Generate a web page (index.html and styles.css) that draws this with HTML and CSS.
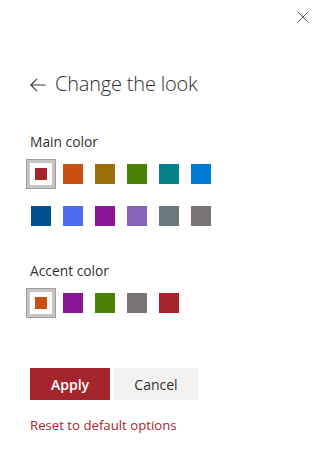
FILE: index.html
```html
<!DOCTYPE html>
<html lang="en">
<head>
	<meta charset="utf-8" />
	<title>Change the look</title>
	<link rel="stylesheet" href="styles.css">
</head>
<body>

<div class="panel">
	<div class="header">
		<button class="close" aria-label="Close">
			<svg width="12" height="12" viewBox="0 0 12 12"><path d="M0.5 0.5 L11.5 11.5 M11.5 0.5 L0.5 11.5" stroke="#605e5c" stroke-width="1" fill="none"/></svg>
		</button>
	</div>

	<div class="content">
		<h2 class="title">
			<svg class="back" width="16" height="14" viewBox="0 0 16 14"><path d="M7 0.8 L0.8 7 L7 13.2 M0.8 7 L15.5 7" stroke="#323130" stroke-width="1.1" fill="none"/></svg>
			<span>Change the look</span>
		</h2>

		<p class="label">Main color</p>
		<div class="swatches">
			<div class="cell selected"><span style="background:#a4262c"></span></div>
			<div class="cell"><span style="background:#ca5010"></span></div>
			<div class="cell"><span style="background:#986f0b"></span></div>
			<div class="cell"><span style="background:#498205"></span></div>
			<div class="cell"><span style="background:#038387"></span></div>
			<div class="cell"><span style="background:#0078d4"></span></div>
			<div class="cell"><span style="background:#004e8c"></span></div>
			<div class="cell"><span style="background:#4f6bed"></span></div>
			<div class="cell"><span style="background:#881798"></span></div>
			<div class="cell"><span style="background:#8764b8"></span></div>
			<div class="cell"><span style="background:#69797e"></span></div>
			<div class="cell"><span style="background:#7a7574"></span></div>
		</div>

		<p class="label accent-label">Accent color</p>
		<div class="swatches">
			<div class="cell selected"><span style="background:#ca5010"></span></div>
			<div class="cell"><span style="background:#881798"></span></div>
			<div class="cell"><span style="background:#498205"></span></div>
			<div class="cell"><span style="background:#7a7574"></span></div>
			<div class="cell"><span style="background:#a4262c"></span></div>
		</div>

		<div class="actions">
			<button class="btn primary">Apply</button>
			<button class="btn">Cancel</button>
		</div>

		<a class="reset" href="#">Reset to default options</a>
	</div>
</div>

</body>
</html>
```

FILE: styles.css
```css
body {
	margin: 0;
	background: #fff;
	font-family: 'Open Sans', 'Noto Sans', sans-serif;
	color: #323130;
}
.panel {
	width: 327px;
	height: 456px;
}
.header {
	display: flex;
	justify-content: flex-end;
	padding: 5px 12px 0 0;
}
.close {
	width: 24px;
	height: 24px;
	padding: 0;
	border: none;
	background: none;
	display: flex;
	align-items: center;
	justify-content: center;
}
.content {
	padding-left: 30px;
}
.title {
	display: flex;
	align-items: center;
	gap: 9px;
	margin: 41px 0 0 0;
	height: 28px;
	font-size: 20px;
	font-weight: 300;
	line-height: 28px;
	letter-spacing: -0.2px;
}
.back {
	margin-top: 1px;
}
.label {
	margin: 34px 0 0 0;
	font-size: 13.8px;
	line-height: 20px;
}
.accent-label {
	margin-top: 30px;
}
.swatches {
	display: grid;
	grid-template-columns: repeat(6, 30px);
	column-gap: 2px;
	row-gap: 12px;
	margin: 7px 0 0 -4px;
}
.cell {
	width: 30px;
	height: 30px;
	box-sizing: border-box;
	display: flex;
	align-items: center;
	justify-content: center;
}
.cell span {
	display: block;
	width: 20px;
	height: 20px;
}
.cell.selected {
	border: 1px solid #a19f9d;
	box-shadow: inset 0 0 0 3px #c8c6c4;
	background: #fff;
}
.cell.selected span {
	width: 12px;
	height: 12px;
}
.actions {
	display: flex;
	gap: 4px;
	margin-top: 50px;
}
.btn {
	height: 32px;
	width: 84px;
	border: none;
	background: #f3f2f1;
	color: #323130;
	font-family: inherit;
	font-size: 14px;
	padding: 0;
}
.btn.primary {
	width: 80px;
	background: #a4262c;
	color: #fff;
	font-weight: 600;
}
.reset {
	display: block;
	margin-top: 15px;
	font-size: 13.2px;
	line-height: 20px;
	color: #a4262c;
	text-decoration: none;
}
```
